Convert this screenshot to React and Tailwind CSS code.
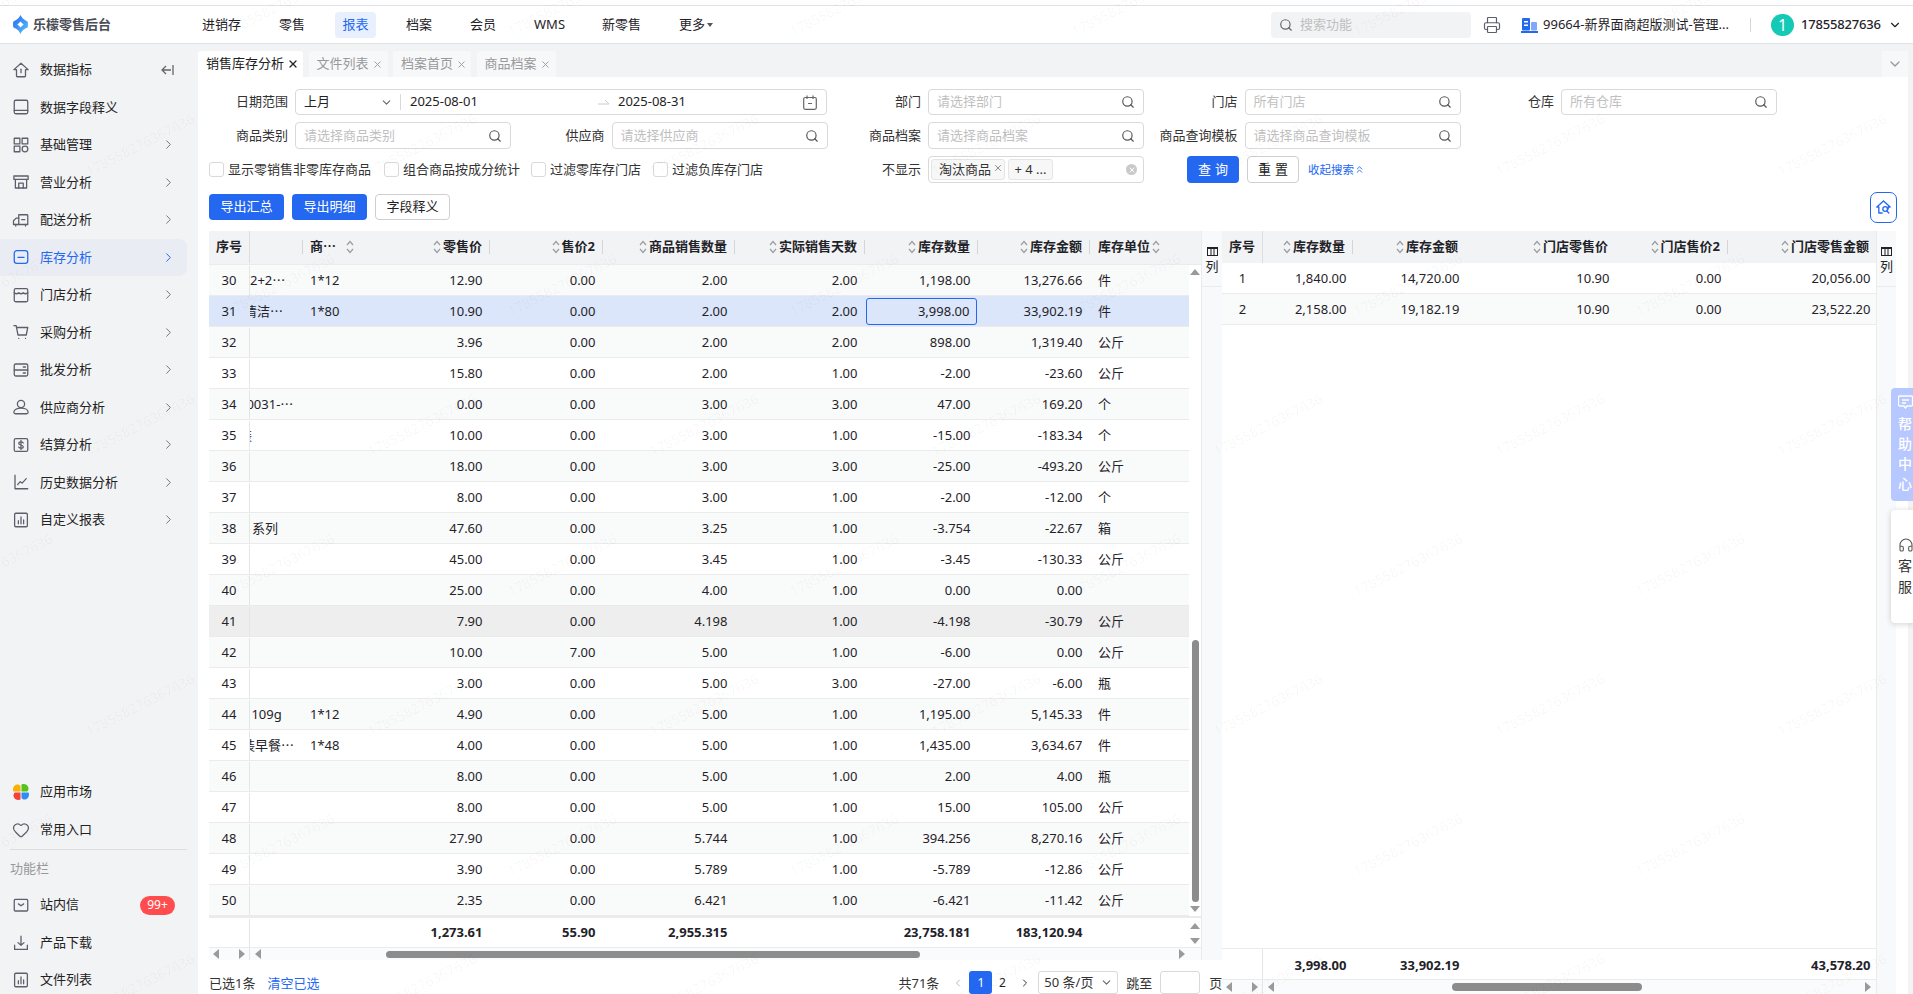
import { Search, Printer, ChevronDown, ChevronRight, ChevronLeft, ChevronsUp, X, Heart, Headphones } from 'lucide-react';

const rows = [
  { n: 30, name: '2+2⋯', nameCls: '', spec: '1*12', v: ['12.90', '0.00', '2.00', '2.00', '1,198.00', '13,276.66'], unit: '件' },
  { n: 31, name: '清洁⋯', nameCls: '-ml-[6px]', spec: '1*80', v: ['10.90', '0.00', '2.00', '2.00', '3,998.00', '33,902.19'], unit: '件', selected: true },
  { n: 32, v: ['3.96', '0.00', '2.00', '2.00', '898.00', '1,319.40'], unit: '公斤' },
  { n: 33, v: ['15.80', '0.00', '2.00', '1.00', '-2.00', '-23.60'], unit: '公斤' },
  { n: 34, name: '00031-⋯', nameCls: '-ml-[11px]', v: ['0.00', '0.00', '3.00', '3.00', '47.00', '169.20'], unit: '个' },
  { n: 35, name: '装', nameCls: '-ml-[11px]', v: ['10.00', '0.00', '3.00', '1.00', '-15.00', '-183.34'], unit: '个' },
  { n: 36, v: ['18.00', '0.00', '3.00', '3.00', '-25.00', '-493.20'], unit: '公斤' },
  { n: 37, v: ['8.00', '0.00', '3.00', '1.00', '-2.00', '-12.00'], unit: '个' },
  { n: 38, name: '系列', nameCls: 'ml-[2px]', v: ['47.60', '0.00', '3.25', '1.00', '-3.754', '-22.67'], unit: '箱' },
  { n: 39, v: ['45.00', '0.00', '3.45', '1.00', '-3.45', '-130.33'], unit: '公斤' },
  { n: 40, v: ['25.00', '0.00', '4.00', '1.00', '0.00', '0.00'], unit: '' },
  { n: 41, v: ['7.90', '0.00', '4.198', '1.00', '-4.198', '-30.79'], unit: '公斤', hover: true },
  { n: 42, v: ['10.00', '7.00', '5.00', '1.00', '-6.00', '0.00'], unit: '公斤' },
  { n: 43, v: ['3.00', '0.00', '5.00', '3.00', '-27.00', '-6.00'], unit: '瓶' },
  { n: 44, name: '1109g', nameCls: '-ml-[6px]', spec: '1*12', v: ['4.90', '0.00', '5.00', '1.00', '1,195.00', '5,145.33'], unit: '件' },
  { n: 45, name: '装早餐⋯', nameCls: '-ml-[8px]', spec: '1*48', v: ['4.00', '0.00', '5.00', '1.00', '1,435.00', '3,634.67'], unit: '件' },
  { n: 46, v: ['8.00', '0.00', '5.00', '1.00', '2.00', '4.00'], unit: '瓶' },
  { n: 47, v: ['8.00', '0.00', '5.00', '1.00', '15.00', '105.00'], unit: '公斤' },
  { n: 48, v: ['27.90', '0.00', '5.744', '1.00', '394.256', '8,270.16'], unit: '公斤' },
  { n: 49, v: ['3.90', '0.00', '5.789', '1.00', '-5.789', '-12.86'], unit: '公斤' },
  { n: 50, v: ['2.35', '0.00', '6.421', '1.00', '-6.421', '-11.42'], unit: '公斤' },
];

const leftCols = [
  { label: '零售价', w: 'w-[112px]' },
  { label: '售价2', w: 'w-[113px]' },
  { label: '商品销售数量', w: 'w-[132px]' },
  { label: '实际销售天数', w: 'w-[130px]' },
  { label: '库存数量', w: 'w-[113px]' },
  { label: '库存金额', w: 'w-[112px]' },
];
const leftTotals = ['1,273.61', '55.90', '2,955.315', '', '23,758.181', '183,120.94'];

const rightCols = [
  { label: '库存数量', w: 'w-[90px]', sep: true },
  { label: '库存金额', w: 'w-[113px]' },
  { label: '门店零售价', w: 'w-[150px]' },
  { label: '门店售价2', w: 'w-[112px]', sep: true },
  { label: '门店零售金额', w: 'w-[149px]' },
];
const rightRows = [
  { n: 1, v: ['1,840.00', '14,720.00', '10.90', '0.00', '20,056.00'] },
  { n: 2, v: ['2,158.00', '19,182.19', '10.90', '0.00', '23,522.20'] },
];
const rightTotals = ['3,998.00', '33,902.19', '', '', '43,578.20'];

const Ico = ({ children, className = 'text-[#5c5f6b]', size = 18 }) => (
  <svg width={size} height={size} viewBox="0 0 24 24" fill="none" stroke="currentColor" strokeWidth="1.7" strokeLinecap="round" strokeLinejoin="round" className={`shrink-0 ${className}`}>
    {children}
  </svg>
);

const icons = {
  home: <><path d="M12 3 2.500 11.500H6V20a1 1 0 0 0 1 1h10a1 1 0 0 0 1-1v-8.500h3.500z" /><path d="M12 11v4.500" /></>,
  book: <><rect x="3" y="3" width="18" height="18" rx="2" /><path d="M3 16.500h18" /></>,
  grid: <><rect x="3" y="3" width="7.500" height="7.500" /><rect x="13.500" y="3" width="7.500" height="7.500" /><rect x="3" y="13.500" width="7.500" height="7.500" /><circle cx="17.300" cy="17.300" r="3.800" /></>,
  store: <><rect x="2.500" y="4" width="19" height="4.500" /><path d="M4.500 8.500V20h15V8.500" /><path d="M9 20v-6.500h6V20" /></>,
  truck: <><path d="M9 5h11a1 1 0 0 1 1 1v12H9z" /><path d="M9 9.500H5.500L2 13v5h7" /><path d="M13 11.500h4" /><path d="M5 18v2M18 18v2" /></>,
  minus: <><rect x="3" y="3.500" width="18" height="17" rx="3.500" /><path d="M8 12.500h8" /></>,
  shop: <><rect x="3" y="3.500" width="18" height="17.500" rx="2" /><path d="M3 9c2 1.800 4 1.800 6 0 2 1.800 4 1.800 6 0 2 1.800 4 1.800 6 0" /></>,
  cart: <><path d="M2.500 3.500h3L8 16h11l2-10H6" /><path d="M9 20.500h.01M18 20.500h.01" /></>,
  server: <><rect x="3" y="4" width="18" height="16" rx="2" /><path d="M3 12h18M15 8h3M15 16h3" /></>,
  user: <><circle cx="12" cy="8" r="4.800" /><path d="M2.500 19c0-3.200 4-5.500 9.500-5.500s9.500 2.300 9.500 5.500c0 1.200-1 2-2 2h-15c-1 0-2-.8-2-2z" /></>,
  dollar: <><rect x="3" y="3.500" width="18" height="17" rx="2" /><path d="M15 9.300c-.5-1-1.500-1.500-3-1.500-1.800 0-3 .8-3 2.100 0 2.800 6 1.400 6 4.300 0 1.400-1.300 2.100-3 2.100-1.500 0-2.600-.6-3-1.600M12 6v12" /></>,
  chart: <><path d="M4 3v18h17" /><path d="M7.500 15.500l3.500-4 2.500 2 5.500-6" /></>,
  bars: <><rect x="3.500" y="3" width="17" height="18" rx="1.500" /><path d="M8.500 17v-4M12 17V8M15.500 17v-5" /></>,
  mail: <><rect x="3" y="4.500" width="18" height="15.500" rx="1.500" /><path d="M8.500 10.500l3.500 2.500 3.500-2.500" /></>,
  download: <><path d="M12 3v12M8 11.500l4 3.500 4-3.500M3.500 15v5.500h17V15" /></>,
};

const navMain = [
  ['数据指标', 'home'], ['数据字段释义', 'book'], ['基础管理', 'grid'], ['营业分析', 'store'], ['配送分析', 'truck'], ['库存分析', 'minus'],
  ['门店分析', 'shop'], ['采购分析', 'cart'], ['批发分析', 'server'], ['供应商分析', 'user'], ['结算分析', 'dollar'], ['历史数据分析', 'chart'], ['自定义报表', 'bars'],
];

const Logo = () => (
  <svg width="15" height="19" viewBox="0 0 15 19" className="shrink-0">
    <defs>
      <linearGradient id="lg" x1="0" y1="0" x2="1" y2="1">
        <stop offset="0" stopColor="#2468f2" />
        <stop offset="1" stopColor="#5ec4f8" />
      </linearGradient>
    </defs>
    <path fillRule="evenodd" d="M7.500 0c1 2.500 3.200 4.800 7 6.500.6.300.6 5.700 0 6-3.800 1.700-6 3.500-7 6.500-1-3-3.200-4.800-7-6.500-.6-.3-.6-5.700 0-6 3.800-1.700 6-4 7-6.500zm0 6.500C6.700 7.600 5.600 8.600 4.300 9.500c1.300.9 2.400 1.900 3.200 3 .8-1.100 1.900-2.100 3.200-3-1.300-.9-2.400-1.900-3.200-3z" fill="url(#lg)" />
  </svg>
);

const AppMarket = () => (
  <svg width="18" height="18" viewBox="0 0 18 18" className="shrink-0">
    <path d="M9.500 8.500V1.500C12 .2 16 1.500 16.500 5c.2 1.500-.5 3-1.500 3.500z" fill="#52c41a" />
    <path d="M9.500 9.500H16.500C17.800 12 16.500 16 13 16.500c-1.500.2-3-.5-3.500-1.500z" fill="#2f8cf5" />
    <path d="M8.500 9.500V16.500C6 17.800 2 16.500 1.500 13c-.2-1.500.5-3 1.500-3.500z" fill="#f5413c" />
    <path d="M8.500 8.500H1.500C.2 6 1.500 2 5 1.500c1.500-.2 3 .5 3.500 1.500z" fill="#fab005" />
  </svg>
);

const Sort = () => (
  <svg width="8" height="14" viewBox="0 0 8 14" fill="none" stroke="#9a9da3" strokeWidth="1.200" className="shrink-0">
    <path d="M1 5l3-3.500L7 5M1 9l3 3.500L7 9" />
  </svg>
);

const Tri = ({ dir }) => {
  const pts = { up: '0,7 5,1 10,7', down: '0,1 5,7 10,1', left: '7,0 1,5 7,10', right: '1,0 7,5 1,10' }[dir];
  return (
    <svg width={dir === 'up' || dir === 'down' ? 10 : 8} height={dir === 'up' || dir === 'down' ? 8 : 10} className="shrink-0">
      <polygon points={pts} fill="#9a9a9a" />
    </svg>
  );
};

const Sep = ({ on = true }) => <i className={`w-px h-[14px] shrink-0 ${on ? 'bg-[#d3d5d9]' : 'bg-transparent'}`} />;

const HeadCell = ({ label, w, sep = true }) => (
  <div className={`${w} flex items-center justify-end h-full font-bold shrink-0`}>
    <Sort />
    <span className="ml-[2px] mr-[7px] whitespace-nowrap">{label}</span>
    <Sep on={sep} />
  </div>
);

const Field = ({ label, wide, children }) => (
  <div className={`flex items-center h-full shrink-0 ${wide ? 'w-[633px]' : 'w-[316.500px]'}`}>
    <span className="w-[90px] mr-[7px] text-right text-[#333] whitespace-nowrap shrink-0">{label}</span>
    {children}
  </div>
);

const SearchInput = ({ placeholder }) => (
  <div className="w-[216px] h-full flex items-center justify-between border border-[#d9d9d9] rounded-[4px] pl-[8px] pr-[8px] bg-white">
    <span className="text-[#bfbfbf] whitespace-nowrap">{placeholder}</span>
    <Search size={14} className="text-[#555] shrink-0" />
  </div>
);

const Check = ({ label, w }) => (
  <label className={`flex items-center shrink-0 ${w}`}>
    <span className="w-[15px] h-[15px] border border-[#d9d9d9] rounded-[3px] bg-white shrink-0 mr-[4px]" />
    <span className="text-[#333] whitespace-nowrap">{label}</span>
  </label>
);

const ColumnsBtn = () => (
  <div className="h-[56px] border-b border-[#ebebeb] flex flex-col items-center pt-[16px]">
    <svg width="11" height="9" viewBox="0 0 11 9" fill="none" stroke="#222" className="shrink-0">
      <rect x=".5" y=".5" width="10" height="8" />
      <path d="M.5 1.500h10M4 1v8M7 1v8" />
    </svg>
    <span className="text-[#222] mt-[1px]">列</span>
  </div>
);

const Watermarks = () => {
  const marks = [];
  for (let k = -1; k < 8; k++) {
    for (let n = 0; n < 4; n++) {
      marks.push({ x: 140 + 282 * k, y: 145 + 280 * n });
      marks.push({ x: -2 + 282 * k, y: 5 + 280 * n });
    }
  }
  return (
    <div className="absolute inset-0 overflow-hidden pointer-events-none z-50">
      {marks.map((m, i) => (
        <span
          key={i}
          className="absolute -translate-x-1/2 -translate-y-1/2 -rotate-[27deg] text-[14px] leading-none text-black/[0.04] whitespace-nowrap"
          style={{ left: m.x, top: m.y }}
        >
          178558276367636
        </span>
      ))}
    </div>
  );
};

const Header = () => (
  <div className="mt-[5px] h-[39px] shrink-0 flex items-center bg-white border-y border-[#e0e1e4]">
    <div className="w-[202px] shrink-0 flex items-center pl-[13px]">
      <Logo />
      <span className="ml-[5px] font-bold text-[#4a4d55] whitespace-nowrap">乐檬零售后台</span>
    </div>
    <span className="ml-0 w-[77px] shrink-0">进销存</span>
    <span className="w-[56px] shrink-0">零售</span>
    <span className="w-[41px] h-[26px] shrink-0 flex items-center justify-center rounded-[4px] bg-[#e8f0fd] text-[#2468f2]">报表</span>
    <span className="ml-[30px] w-[64px] shrink-0">档案</span>
    <span className="w-[64px] shrink-0">会员</span>
    <span className="w-[68px] shrink-0">WMS</span>
    <span className="w-[77px] shrink-0">新零售</span>
    <span className="flex items-center shrink-0">更多<i className="ml-[2px] mt-[1px] border-x-[3px] border-t-[4px] border-x-transparent border-t-[#555]" /></span>
    <div className="ml-[558px] w-[200px] h-[26px] shrink-0 flex items-center rounded-[4px] bg-[#f2f3f5] pl-[8px] text-[#bfbfbf]">
      <Search size={14} className="text-[#666] shrink-0" />
      <span className="ml-[7px]">搜索功能</span>
    </div>
    <Printer size={18} strokeWidth={1.600} className="ml-[12px] text-[#5c5f6b] shrink-0" />
    <svg width="17" height="16" viewBox="0 0 17 16" className="ml-[20px] shrink-0">
      <rect x="1" y="1" width="8" height="12.500" rx="1" fill="#2468f2" />
      <rect x="10" y="5" width="6" height="8.500" rx="1" fill="#7fa8f5" />
      <rect x="3" y="4" width="4" height="1.500" fill="#fff" />
      <rect x="3" y="7.500" width="4" height="1.500" fill="#fff" />
      <rect x="0" y="14" width="17" height="2" fill="#2468f2" />
    </svg>
    <span className="ml-[5px] w-[187px] shrink-0 whitespace-nowrap overflow-hidden">99664-新界面商超版测试-管理...</span>
    <i className="ml-[20px] w-px h-[14px] bg-[#d3d5d9] shrink-0" />
    <span className="ml-[20px] w-[23px] h-[22px] shrink-0 flex items-center justify-center rounded-full bg-[#14c9b5] text-white text-[16px]">1</span>
    <span className="ml-[7px] font-medium tracking-[-0.2px] whitespace-nowrap">17855827636</span>
    <ChevronDown size={14} strokeWidth={2} className="ml-[7px] shrink-0" />
  </div>
);

const Sidebar = () => (
  <aside className="w-[198px] shrink-0 bg-[#f2f3f5] overflow-hidden pt-[7px]">
    {navMain.map(([label, icon], i) => {
      const active = label === '库存分析';
      return (
        <div key={label} className={`w-[187px] h-[37.500px] flex items-center pl-[12px] pr-[11px] rounded-r-lg ${active ? 'bg-[#e9ecf3] text-[#2468f2]' : 'text-[#222]'}`}>
          <Ico className={active ? 'text-[#2468f2]' : 'text-[#5c5f6b]'}>{icons[icon]}</Ico>
          <span className="ml-[10px] flex-1 whitespace-nowrap">{label}</span>
          {i === 0 ? (
            <svg width="13" height="12" viewBox="0 0 13 12" fill="none" stroke="#666" strokeWidth="1.300" className="mr-[2px]">
              <path d="M12 1v10M10 6H1M5 2 1 6l4 4" />
            </svg>
          ) : i > 1 ? (
            <ChevronRight size={15} strokeWidth={1.600} className={active ? 'text-[#2468f2]' : 'text-[#777]'} />
          ) : null}
        </div>
      );
    })}
    <div className="mt-[234px] pl-[12px] w-[187px]">
      <div className="h-[38px] flex items-center"><AppMarket /><span className="ml-[10px] text-[#222]">应用市场</span></div>
      <div className="h-[38px] flex items-center"><Heart size={18} strokeWidth={1.600} className="text-[#5c5f6b]" /><span className="ml-[10px] text-[#222]">常用入口</span></div>
    </div>
    <div className="ml-[10px] w-[177px] border-t border-[#dcdde0]" />
    <div className="h-[38px] pl-[10px] flex items-center text-[#999]">功能栏</div>
    <div className="pl-[12px] w-[187px] -mt-[1px]">
      <div className="h-[37px] flex items-center">
        <Ico>{icons.mail}</Ico>
        <span className="ml-[10px] text-[#222]">站内信</span>
        <span className="ml-auto mr-[12px] w-[35px] h-[19px] rounded-full bg-[#ff4d4f] text-white text-[12px] flex items-center justify-center">99+</span>
      </div>
      <div className="h-[38px] flex items-center"><Ico>{icons.download}</Ico><span className="ml-[10px] text-[#222]">产品下载</span></div>
      <div className="h-[37px] flex items-center"><Ico>{icons.bars}</Ico><span className="ml-[10px] text-[#222]">文件列表</span></div>
    </div>
  </aside>
);

const tabs = [['文件列表', 'w-[79px]'], ['档案首页', 'w-[78px]'], ['商品档案', 'w-[79px]']];

const Tabs = () => (
  <div className="h-[33px] shrink-0 flex items-end bg-[#f2f3f5] gap-[5.500px]">
    <div className="w-[105px] h-[26px] bg-white rounded-t-[3px] flex items-center pl-[8px] text-[#222] whitespace-nowrap">
      销售库存分析<X size={12} strokeWidth={2.500} className="ml-[3px]" />
    </div>
    {tabs.map(([t, w]) => (
      <div key={t} className={`${w} h-[26px] bg-[#f7f8fa] rounded-t-[3px] flex items-center pl-[8px] text-[#999] whitespace-nowrap`}>
        {t}<X size={11} className="ml-[3px] text-[#999]" />
      </div>
    ))}
    <div className="ml-auto w-[26px] h-[26px] bg-[#f7f8fa] flex items-center justify-center">
      <ChevronDown size={16} className="text-[#999]" />
    </div>
  </div>
);

const Filters = () => (
  <>
    <div className="flex h-[26px] mt-[12px]">
      <Field label="日期范围" wide>
        <div className="w-[532px] h-full flex items-center border border-[#d9d9d9] rounded-[4px] pl-[8px]">
          <span className="w-[76px] text-[#222]">上月</span>
          <ChevronDown size={13} className="text-[#666]" />
          <i className="ml-[7px] w-px h-[16px] bg-[#d9d9d9]" />
          <span className="ml-[9px] w-[67px] text-[#222] whitespace-nowrap">2025-08-01</span>
          <svg width="12" height="6" viewBox="0 0 12 6" fill="none" stroke="#ccc" className="ml-[121px]"><path d="M0 5h11L7 1" /></svg>
          <span className="ml-[8px] text-[#222] whitespace-nowrap">2025-08-31</span>
          <svg width="14" height="15" viewBox="0 0 14 15" fill="none" stroke="#666" strokeWidth="1.200" className="ml-auto mr-[9px]">
            <rect x=".7" y="2.500" width="12.600" height="11.800" rx="1.500" /><path d="M4 .5v3.500M10 .5v3.500M5 8.500h4" />
          </svg>
        </div>
      </Field>
      <Field label="部门"><SearchInput placeholder="请选择部门" /></Field>
      <Field label="门店"><SearchInput placeholder="所有门店" /></Field>
      <Field label="仓库"><SearchInput placeholder="所有仓库" /></Field>
    </div>
    <div className="flex h-[27px] mt-[7px]">
      <Field label="商品类别"><SearchInput placeholder="请选择商品类别" /></Field>
      <Field label="供应商"><SearchInput placeholder="请选择供应商" /></Field>
      <Field label="商品档案"><SearchInput placeholder="请选择商品档案" /></Field>
      <Field label="商品查询模板"><SearchInput placeholder="请选择商品查询模板" /></Field>
    </div>
    <div className="flex items-center h-[27px] mt-[7px] pl-[11px]">
      <Check label="显示零销售非零库存商品" w="w-[175px]" />
      <Check label="组合商品按成分统计" w="w-[147px]" />
      <Check label="过滤零库存门店" w="w-[122px]" />
      <Check label="过滤负库存门店" w="w-[178px]" />
      <span className="w-[90px] mr-[7px] text-right text-[#333] shrink-0">不显示</span>
      <div className="w-[216px] h-full flex items-center border border-[#d9d9d9] rounded-[4px] pl-[2px] shrink-0">
        <span className="w-[74px] h-[21px] flex items-center pl-[7px] bg-[#f7f7f7] border border-[#e5e5e5] rounded-[3px] text-[#333] whitespace-nowrap">
          淘汰商品<X size={10} className="ml-[2px] -mt-[3px] text-[#777]" />
        </span>
        <span className="ml-[3px] w-[45px] h-[21px] flex items-center justify-center bg-[#f7f7f7] border border-[#e5e5e5] rounded-[3px] text-[#333] whitespace-nowrap">+ 4 ...</span>
        <span className="ml-auto mr-[6px] w-[11px] h-[11px] rounded-full bg-[#c9c9c9] flex items-center justify-center">
          <X size={8} strokeWidth={3} className="text-white" />
        </span>
      </div>
      <button className="ml-[43px] w-[52px] h-full rounded-[4px] bg-[#2468f2] text-white shrink-0 flex items-center justify-center gap-[4px]"><span>查</span><span>询</span></button>
      <button className="ml-[8px] w-[52px] h-full rounded-[4px] border border-[#cfcfcf] text-[#222] bg-white shrink-0 flex items-center justify-center gap-[4px]"><span>重</span><span>置</span></button>
      <span className="ml-[9px] flex items-center text-[11.500px] text-[#2468f2] shrink-0 whitespace-nowrap">
        收起搜索<ChevronsUp size={11} />
      </span>
    </div>
    <div className="flex items-center h-[26px] mt-[11px] pl-[11px] pr-[11px] gap-[8px]">
      <button className="w-[75px] h-full rounded-[4px] bg-[#2468f2] text-white">导出汇总</button>
      <button className="w-[75px] h-full rounded-[4px] bg-[#2468f2] text-white">导出明细</button>
      <button className="w-[75px] h-full rounded-[4px] border border-[#cfcfcf] text-[#222] bg-white">字段释义</button>
      <button className="ml-auto w-[27px] h-[31px] -my-[3px] rounded-[7px] border border-[#2468f2] flex items-center justify-center bg-white">
        <svg width="17" height="16" viewBox="0 0 24 24" fill="none" stroke="#2468f2" strokeWidth="2" strokeLinecap="round" strokeLinejoin="round">
          <path d="M12 3 2 12h3v9h5M12 3l10 9h-3v3" /><circle cx="14.500" cy="15" r="3.500" /><path d="M17 18l3 3" />
        </svg>
      </button>
    </div>
  </>
);

const LeftTable = () => (
  <div className="w-[993px] shrink-0 flex flex-col h-[729px] border-r border-[#ebebeb]">
    <div className="h-[34px] pb-[1px] shrink-0 flex items-center bg-[#f2f3f5] border-b border-[#ebebeb]">
      <div className="w-[41px] h-full flex items-center justify-center font-bold border-r border-[#dcdde0] shrink-0">序号</div>
      <div className="w-[53px] h-full flex items-center justify-end shrink-0"><Sep /></div>
      <div className="w-[75px] h-full flex items-center pl-[7px] font-bold shrink-0">
        商⋯<span className="ml-[10px]"><Sort /></span><span className="ml-auto"><Sep /></span>
      </div>
      {leftCols.map((c) => <HeadCell key={c.label} {...c} />)}
      <div className="w-[99px] h-full flex items-center pl-[8px] font-bold shrink-0">库存单位<span className="ml-[2px]"><Sort /></span></div>
    </div>
    <div className="flex flex-1 min-h-0">
      <div className="w-[980px] shrink-0">
        {rows.map((r) => (
          <div
            key={r.n}
            className={`h-[31px] pt-[1px] flex items-center border-b border-[#ebebeb] ${r.selected ? 'bg-[#dbe6fa]' : r.hover ? 'bg-[#eeeeee]' : r.n % 2 === 0 ? 'bg-[#f9fafa]' : 'bg-white'}`}
          >
            <div className="w-[41px] h-full flex items-center justify-center border-r border-[#e5e5e5] shrink-0">{r.n}</div>
            <div className="w-[53px] h-full flex items-center overflow-hidden whitespace-nowrap shrink-0">
              <span className={r.nameCls}>{r.name}</span>
            </div>
            <div className="w-[75px] pl-[7px] shrink-0">{r.spec}</div>
            {leftCols.map((c, i) =>
              r.selected && i === 4 ? (
                <div key={c.label} className={`${c.w} h-full py-[1px] px-[1px] shrink-0`}>
                  <div className="h-full flex items-center justify-end pr-[6.500px] border border-[#2468f2] rounded-[3px]">{r.v[i]}</div>
                </div>
              ) : (
                <div key={c.label} className={`${c.w} text-right pr-[7.500px] shrink-0`}>{r.v[i]}</div>
              ),
            )}
            <div className="w-[99px] pl-[8px] shrink-0">{r.unit}</div>
          </div>
        ))}
      </div>
      <div className="flex-1 flex flex-col items-center pt-[3px] pb-[3px]">
        <Tri dir="up" />
        <div className="mt-auto w-[7px] h-[262px] rounded-full bg-[#8c8c8c]" />
        <span className="mt-[3px] flex"><Tri dir="down" /></span>
      </div>
    </div>
    <div className="h-[31px] pt-[1px] shrink-0 flex items-center border-t-2 border-[#ebebeb]">
      <div className="w-[169px] h-full shrink-0 flex"><div className="w-[41px] h-full border-r border-[#e5e5e5]" /></div>
      {leftCols.map((c, i) => <div key={c.label} className={`${c.w} text-right pr-[7.500px] font-bold shrink-0`}>{leftTotals[i]}</div>)}
      <div className="ml-auto w-[13px] flex flex-col items-center gap-[7px]"><Tri dir="up" /><Tri dir="down" /></div>
    </div>
    <div className="flex-none h-[13px] flex items-center bg-[#fafbfc] border-t border-[#ebebeb]">
      <div className="w-[41px] h-full flex items-center justify-between px-[3px] border-r border-[#e5e5e5] shrink-0"><Tri dir="left" /><Tri dir="right" /></div>
      <span className="ml-[4px] flex"><Tri dir="left" /></span>
      <div className="ml-[124px] w-[534px] h-[7px] rounded-full bg-[#8c8c8c] shrink-0" />
      <span className="ml-[258px] flex"><Tri dir="right" /></span>
    </div>
  </div>
);

const Pagination = () => (
  <div className="h-[34px] flex items-end relative z-10 bg-white whitespace-nowrap">
    <span className="h-[23px] pt-[2px] flex items-center shrink-0 text-[#333]">已选1条</span>
    <span className="ml-[12px] h-[23px] pt-[2px] flex items-center shrink-0 text-[#2468f2]">清空已选</span>
    <span className="ml-[579px] h-[23px] pt-[2px] flex items-center shrink-0 text-[#333]">共71条</span>
    <span className="ml-[13px] h-[23px] w-[12px] flex items-center shrink-0"><ChevronLeft size={14} className="text-[#bbb]" /></span>
    <span className="ml-[5px] w-[23px] h-[23px] rounded-[3px] bg-[#2468f2] text-white text-[12px] flex items-center justify-center shrink-0">1</span>
    <span className="ml-[5px] w-[10px] h-[23px] flex items-center justify-center text-[12px] shrink-0">2</span>
    <span className="ml-[12px] w-[12px] h-[23px] flex items-center shrink-0"><ChevronRight size={14} className="text-[#333]" /></span>
    <div className="ml-[7px] w-[80px] h-[23px] flex items-center justify-between pl-[5px] pr-[4px] border border-[#d9d9d9] rounded-[3px] text-[#333] shrink-0">
      50 条/页<ChevronDown size={13} className="text-[#666]" />
    </div>
    <span className="ml-[8px] h-[23px] pt-[2px] flex items-center shrink-0 text-[#333]">跳至</span>
    <span className="ml-[8px] w-[40px] h-[23px] border border-[#d9d9d9] rounded-[3px] shrink-0" />
    <span className="ml-[9px] h-[23px] pt-[2px] flex items-center shrink-0 text-[#333]">页</span>
  </div>
);

const RightTable = () => (
  <div className="w-[655px] shrink-0 flex flex-col border-r border-[#ebebeb]">
    <div className="h-[32px] shrink-0 flex items-center bg-[#f2f3f5]">
      <div className="w-[41px] h-full flex items-center justify-center font-bold border-r border-[#dcdde0] shrink-0">序号</div>
      {rightCols.map((c) => <HeadCell key={c.label} {...c} sep={!!c.sep} />)}
    </div>
    <div className="flex-1 min-h-0">
      {rightRows.map((r) => (
        <div key={r.n} className={`h-[31px] pt-[1px] flex items-center border-b border-[#ebebeb] ${r.n % 2 === 0 ? 'bg-[#f9fafa]' : 'bg-white'}`}>
          <div className="w-[41px] text-center shrink-0">{r.n}</div>
          {rightCols.map((c, i) => <div key={c.label} className={`${c.w} text-right pr-[6.500px] shrink-0`}>{r.v[i]}</div>)}
        </div>
      ))}
    </div>
    <div className="h-[32px] pt-[4px] shrink-0 flex items-center border-y border-[#ebebeb]">
      <div className="w-[41px] h-[30px] -mt-[4px] border-r border-[#e5e5e5] shrink-0" />
      {rightCols.map((c, i) => <div key={c.label} className={`${c.w} text-right pr-[6.500px] font-bold shrink-0`}>{rightTotals[i]}</div>)}
    </div>
    <div className="h-[14px] shrink-0 flex items-center bg-[#fafbfc]">
      <div className="w-[41px] h-full flex items-center justify-between px-[3px] border-r border-[#e5e5e5] shrink-0"><Tri dir="left" /><Tri dir="right" /></div>
      <span className="ml-[4px] flex"><Tri dir="left" /></span>
      <div className="ml-[177px] w-[190px] h-[8px] rounded-full bg-[#8c8c8c] shrink-0" />
      <span className="ml-auto mr-[4px] flex"><Tri dir="right" /></span>
    </div>
  </div>
);

const Floating = () => (
  <>
    <div className="absolute z-40 right-0 top-[388px] w-[22px] h-[113px] rounded-l-[4px] bg-[#b7c7ff] text-white text-[14px] flex flex-col items-start pl-[7px] pt-[7px] overflow-hidden leading-[20px] font-medium">
      <svg width="15" height="14" viewBox="0 0 15 14" fill="none" stroke="currentColor" strokeWidth="1.300" className="mb-[5px] shrink-0">
        <path d="M1.500 1h12a1 1 0 0 1 1 1v8a1 1 0 0 1-1 1H9l-1.500 2L6 11H1.500a1 1 0 0 1-1-1V2a1 1 0 0 1 1-1z" /><path d="M4 5h7M4 8h4" />
      </svg>
      <span>帮</span><span>助</span><span>中</span><span>心</span>
    </div>
    <div className="absolute z-40 right-0 top-[510px] w-[22px] h-[113px] rounded-l-[4px] bg-white shadow-[0_1px_6px_rgba(0,0,0,0.18)] text-[14px] text-[#333] flex flex-col items-start pl-[7px] pt-[27px] overflow-hidden leading-[21px]">
      <Headphones size={16} strokeWidth={1.600} className="shrink-0 mb-[2px] text-[#555]" />
      <span>客</span><span>服</span>
    </div>
  </>
);

export default function App() {
  return (
    <div className="relative h-screen w-full overflow-hidden bg-white flex flex-col font-['Noto_Sans','Noto_Sans_CJK_SC',sans-serif] text-[13px] text-[#1f2329]">
      <Header />
      <div className="flex flex-1 min-h-0">
        <Sidebar />
        <main className="flex-1 min-w-0 flex bg-white">
          <div className="flex-1 min-w-0 flex flex-col">
            <Tabs />
            <Filters />
            <div className="flex mt-[11px] pl-[11px] flex-1 min-h-0">
              <div className="w-[1013px] shrink-0 flex flex-col">
                <div className="flex">
                  <LeftTable />
                  <div className="w-[20px] h-[729px] bg-[#f8f9fb] shrink-0"><ColumnsBtn /></div>
                </div>
                <Pagination />
              </div>
              <RightTable />
              <div className="w-[19px] bg-[#f8f9fb] shrink-0"><ColumnsBtn /></div>
            </div>
          </div>
          <div className="w-[5px] bg-[#f2f3f5] shrink-0" />
        </main>
      </div>
      <Floating />
      <Watermarks />
    </div>
  );
}
